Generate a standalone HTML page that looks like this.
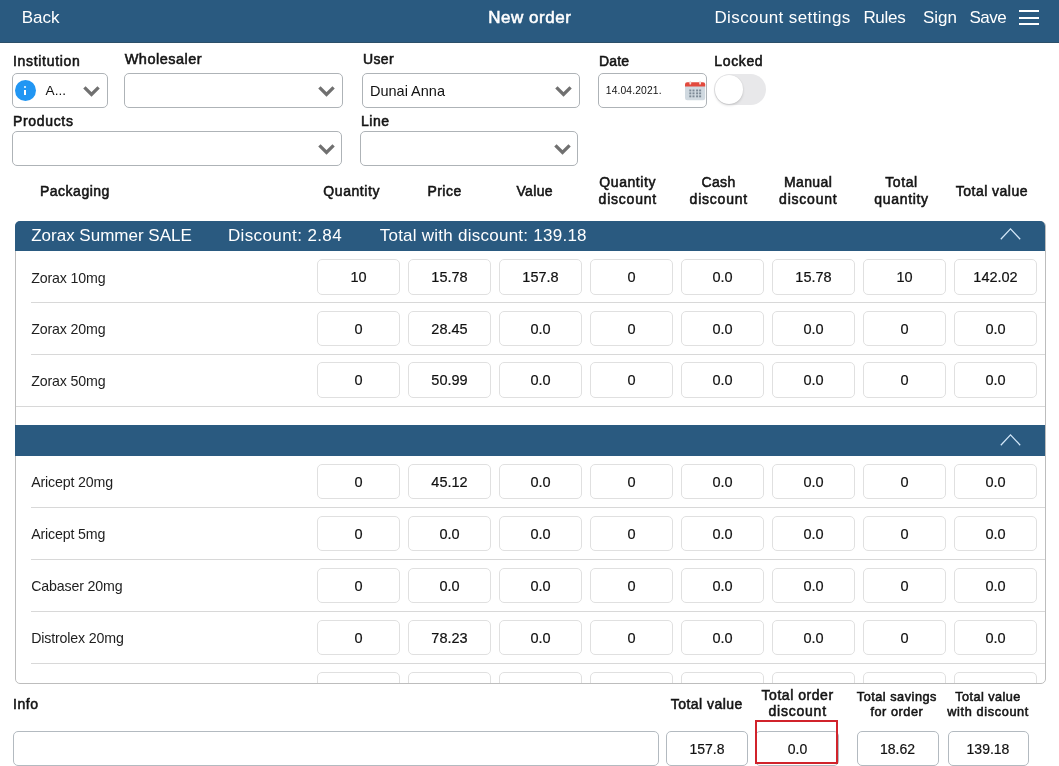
<!DOCTYPE html>
<html><head><meta charset="utf-8">
<style>
html,body{margin:0;padding:0;}
body{width:1059px;height:766px;overflow:hidden;position:relative;background:#fff;font-family:"Liberation Sans",sans-serif;color:#111;}
.a{position:absolute;white-space:nowrap;line-height:1;}
#w{position:absolute;left:0;top:0;width:1059px;height:766px;will-change:transform;}
</style></head><body><div id="w">
<div style="position:absolute;left:0px;top:0px;width:1059px;height:43px;background:#2A5A80;"></div>
<div style="position:absolute;left:0px;top:42px;width:1059px;height:1px;background:#2B4F69;"></div>
<div class="a" style="left:21.70px;top:8.71px;font-size:17px;font-weight:400;color:#fff;">Back</div>
<div class="a" style="left:488.20px;top:8.71px;font-size:17px;font-weight:400;color:#fff;letter-spacing:0.524px;-webkit-text-stroke:0.55px #fff;">New order</div>
<div class="a" style="left:714.40px;top:8.51px;font-size:17px;font-weight:400;color:#fff;letter-spacing:0.400px;">Discount settings</div>
<div class="a" style="left:863.40px;top:8.51px;font-size:17px;font-weight:400;color:#fff;letter-spacing:-0.300px;">Rules</div>
<div class="a" style="left:922.90px;top:8.51px;font-size:17px;font-weight:400;color:#fff;">Sign</div>
<div class="a" style="left:969.50px;top:8.51px;font-size:17px;font-weight:400;color:#fff;letter-spacing:-0.500px;">Save</div>
<div style="position:absolute;left:1019px;top:9.5px;width:20px;height:2px;background:#fff;"></div>
<div style="position:absolute;left:1019px;top:16.5px;width:20px;height:2px;background:#fff;"></div>
<div style="position:absolute;left:1019px;top:22.5px;width:20px;height:2px;background:#fff;"></div>
<div class="a" style="left:12.90px;top:54.35px;font-size:14px;font-weight:400;color:#141414;letter-spacing:0.702px;-webkit-text-stroke:0.55px #141414;">Institution</div>
<div class="a" style="left:124.70px;top:52.03px;font-size:14.5px;font-weight:400;color:#141414;letter-spacing:0.483px;-webkit-text-stroke:0.55px #141414;">Wholesaler</div>
<div class="a" style="left:362.90px;top:52.45px;font-size:14px;font-weight:400;color:#141414;letter-spacing:0.395px;-webkit-text-stroke:0.55px #141414;">User</div>
<div class="a" style="left:599.00px;top:54.35px;font-size:14px;font-weight:400;color:#141414;letter-spacing:0.195px;-webkit-text-stroke:0.55px #141414;">Date</div>
<div class="a" style="left:714.30px;top:54.35px;font-size:14px;font-weight:400;color:#141414;letter-spacing:0.643px;-webkit-text-stroke:0.55px #141414;">Locked</div>
<div class="a" style="left:12.90px;top:114.45px;font-size:14px;font-weight:400;color:#141414;letter-spacing:0.680px;-webkit-text-stroke:0.55px #141414;">Products</div>
<div class="a" style="left:360.90px;top:113.75px;font-size:14px;font-weight:400;color:#141414;letter-spacing:0.578px;-webkit-text-stroke:0.55px #141414;">Line</div>
<div style="position:absolute;left:12px;top:73px;width:96px;height:35px;box-sizing:border-box;border:1px solid #AEB3B7;border-radius:5px;background:#fff;"></div>
<div style="position:absolute;left:14.5px;top:80.2px;width:21px;height:21px;border-radius:50%;background:#2196F3;"></div>
<div style="position:absolute;left:23.8px;top:85.9px;width:2.5px;height:2.4px;border-radius:50%;background:#fff;"></div>
<div style="position:absolute;left:23.8px;top:89.5px;width:2.5px;height:5.7px;background:#fff;"></div>
<div class="a" style="left:45.60px;top:84.09px;font-size:13.6px;font-weight:400;color:#111;">A...</div>
<svg style="position:absolute;left:83px;top:86px;" width="17" height="11" viewBox="0 0 17 11"><path d="M1.4 1.4 L8.5 8.5 L15.6 1.4" fill="none" stroke="#707070" stroke-width="3.3"/></svg>
<div style="position:absolute;left:124px;top:73px;width:219px;height:35px;box-sizing:border-box;border:1px solid #AEB3B7;border-radius:5px;background:#fff;"></div>
<svg style="position:absolute;left:318px;top:86px;" width="17" height="11" viewBox="0 0 17 11"><path d="M1.4 1.4 L8.5 8.5 L15.6 1.4" fill="none" stroke="#707070" stroke-width="3.3"/></svg>
<div style="position:absolute;left:362px;top:73px;width:218px;height:35px;box-sizing:border-box;border:1px solid #AEB3B7;border-radius:5px;background:#fff;"></div>
<div class="a" style="left:370.00px;top:83.73px;font-size:14.5px;font-weight:400;color:#111;">Dunai Anna</div>
<svg style="position:absolute;left:555px;top:86px;" width="17" height="11" viewBox="0 0 17 11"><path d="M1.4 1.4 L8.5 8.5 L15.6 1.4" fill="none" stroke="#707070" stroke-width="3.3"/></svg>
<div style="position:absolute;left:598px;top:73px;width:109px;height:35px;box-sizing:border-box;border:1px solid #AEB3B7;border-radius:5px;background:#fff;"></div>
<div class="a" style="left:605.80px;top:86.28px;font-size:10.3px;font-weight:400;color:#111;letter-spacing:0.130px;">14.04.2021.</div>
<svg style="position:absolute;left:685px;top:80.5px;" width="21" height="20" viewBox="0 0 21 20"><rect x="0" y="3" width="20.2" height="16.3" rx="2.2" fill="#D0D9E0"/><path d="M0 3.4 Q0 1.3 2.2 1.3 L18 1.3 Q20.2 1.3 20.2 3.4 L20.2 5.6 L0 5.6 Z" fill="#E2493D"/><rect x="4.4" y="0" width="1.8" height="3.6" rx="0.9" fill="#F4D9D6"/><rect x="14.2" y="0" width="1.8" height="3.6" rx="0.9" fill="#F4D9D6"/><g fill="#7D8A96"><rect x="4.3" y="8.5" width="2" height="1.9"/><rect x="4.3" y="11.4" width="2" height="1.9"/><rect x="4.3" y="14.4" width="2" height="1.9"/><rect x="7.5" y="8.5" width="2" height="1.9"/><rect x="7.5" y="11.4" width="2" height="1.9"/><rect x="7.5" y="14.4" width="2" height="1.9"/><rect x="11.1" y="8.5" width="2" height="1.9"/><rect x="11.1" y="11.4" width="2" height="1.9"/><rect x="11.1" y="14.4" width="2" height="1.9"/><rect x="14.1" y="8.5" width="2" height="1.9"/><rect x="14.1" y="11.4" width="2" height="1.9"/><rect x="14.1" y="14.4" width="2" height="1.9"/></g></svg>
<div style="position:absolute;left:714px;top:74px;width:52px;height:31px;border-radius:15.5px;background:#E8E8EA;"></div>
<div style="position:absolute;left:714.8px;top:75.4px;width:28.5px;height:28.5px;border-radius:50%;background:#fff;box-shadow:0 1.5px 2.5px rgba(0,0,0,0.14),0 0 1px rgba(0,0,0,0.12);"></div>
<div style="position:absolute;left:12px;top:131px;width:330px;height:35px;box-sizing:border-box;border:1px solid #AEB3B7;border-radius:5px;background:#fff;"></div>
<svg style="position:absolute;left:317.8px;top:144px;" width="17" height="11" viewBox="0 0 17 11"><path d="M1.4 1.4 L8.5 8.5 L15.6 1.4" fill="none" stroke="#707070" stroke-width="3.3"/></svg>
<div style="position:absolute;left:360px;top:131px;width:218px;height:35px;box-sizing:border-box;border:1px solid #AEB3B7;border-radius:5px;background:#fff;"></div>
<svg style="position:absolute;left:554px;top:144px;" width="17" height="11" viewBox="0 0 17 11"><path d="M1.4 1.4 L8.5 8.5 L15.6 1.4" fill="none" stroke="#707070" stroke-width="3.3"/></svg>
<div class="a" style="left:39.90px;top:184.25px;font-size:14px;font-weight:400;color:#141414;letter-spacing:0.516px;-webkit-text-stroke:0.55px #141414;">Packaging</div>
<div class="a" style="left:323.30px;top:184.25px;font-size:14px;font-weight:400;color:#141414;letter-spacing:0.580px;-webkit-text-stroke:0.55px #141414;">Quantity</div>
<div class="a" style="left:427.40px;top:184.25px;font-size:14px;font-weight:400;color:#141414;letter-spacing:0.469px;-webkit-text-stroke:0.55px #141414;">Price</div>
<div class="a" style="left:516.40px;top:184.25px;font-size:14px;font-weight:400;color:#141414;letter-spacing:0.362px;-webkit-text-stroke:0.55px #141414;">Value</div>
<div class="a" style="left:477.69px;width:300px;text-align:center;top:174.95px;font-size:14px;font-weight:400;color:#141414;letter-spacing:0.580px;-webkit-text-stroke:0.55px #141414;">Quantity</div>
<div class="a" style="left:477.79px;width:300px;text-align:center;top:191.75px;font-size:14px;font-weight:400;color:#141414;letter-spacing:0.773px;-webkit-text-stroke:0.55px #141414;">discount</div>
<div class="a" style="left:568.59px;width:300px;text-align:center;top:174.95px;font-size:14px;font-weight:400;color:#141414;letter-spacing:0.387px;-webkit-text-stroke:0.55px #141414;">Cash</div>
<div class="a" style="left:568.79px;width:300px;text-align:center;top:191.75px;font-size:14px;font-weight:400;color:#141414;letter-spacing:0.773px;-webkit-text-stroke:0.55px #141414;">discount</div>
<div class="a" style="left:658.09px;width:300px;text-align:center;top:174.95px;font-size:14px;font-weight:400;color:#141414;letter-spacing:0.385px;-webkit-text-stroke:0.55px #141414;">Manual</div>
<div class="a" style="left:658.29px;width:300px;text-align:center;top:191.75px;font-size:14px;font-weight:400;color:#141414;letter-spacing:0.773px;-webkit-text-stroke:0.55px #141414;">discount</div>
<div class="a" style="left:751.48px;width:300px;text-align:center;top:174.95px;font-size:14px;font-weight:400;color:#141414;letter-spacing:0.566px;-webkit-text-stroke:0.55px #141414;">Total</div>
<div class="a" style="left:751.54px;width:300px;text-align:center;top:191.75px;font-size:14px;font-weight:400;color:#141414;letter-spacing:0.676px;-webkit-text-stroke:0.55px #141414;">quantity</div>
<div class="a" style="left:955.80px;top:184.25px;font-size:14px;font-weight:400;color:#141414;letter-spacing:0.469px;-webkit-text-stroke:0.55px #141414;">Total value</div>
<div style="position:absolute;left:14.6px;top:221px;width:1031.4px;height:462.6px;box-sizing:border-box;border:1.4px solid #BDBDBD;border-radius:5px;"></div>
<div style="position:absolute;left:15px;top:221px;width:1030px;height:30px;background:#2A5A80;border-radius:5px 5px 0 0;"></div>
<div class="a" style="left:31.20px;top:226.81px;font-size:17px;font-weight:400;color:#fff;">Zorax Summer SALE</div>
<div class="a" style="left:227.90px;top:226.81px;font-size:17px;font-weight:400;color:#fff;letter-spacing:0.390px;">Discount: 2.84</div>
<div class="a" style="left:379.70px;top:226.81px;font-size:17px;font-weight:400;color:#fff;letter-spacing:0.250px;">Total with discount: 139.18</div>
<svg style="position:absolute;left:1000px;top:227.2px;" width="21" height="13" viewBox="0 0 21 13"><path d="M0.8 12.2 L10.5 1.8 L20.2 12.2" fill="none" stroke="#D3E7F8" stroke-width="1.25"/></svg>
<div class="a" style="left:31.20px;top:270.58px;font-size:14.2px;font-weight:400;color:#1E1E1E;letter-spacing:-0.150px;">Zorax 10mg</div>
<div style="position:absolute;left:317px;top:259.3px;width:83px;height:35.6px;box-sizing:border-box;border:1px solid #E0E0E0;border-radius:5px;background:#fff;"></div>
<div class="a" style="left:208.50px;width:300px;text-align:center;top:269.83px;font-size:14.5px;font-weight:400;color:#111;-webkit-text-stroke:0.2px #111;">10</div>
<div style="position:absolute;left:408px;top:259.3px;width:83px;height:35.6px;box-sizing:border-box;border:1px solid #E0E0E0;border-radius:5px;background:#fff;"></div>
<div class="a" style="left:299.50px;width:300px;text-align:center;top:269.83px;font-size:14.5px;font-weight:400;color:#111;-webkit-text-stroke:0.2px #111;">15.78</div>
<div style="position:absolute;left:499px;top:259.3px;width:83px;height:35.6px;box-sizing:border-box;border:1px solid #E0E0E0;border-radius:5px;background:#fff;"></div>
<div class="a" style="left:390.50px;width:300px;text-align:center;top:269.83px;font-size:14.5px;font-weight:400;color:#111;-webkit-text-stroke:0.2px #111;">157.8</div>
<div style="position:absolute;left:590px;top:259.3px;width:83px;height:35.6px;box-sizing:border-box;border:1px solid #E0E0E0;border-radius:5px;background:#fff;"></div>
<div class="a" style="left:481.50px;width:300px;text-align:center;top:269.83px;font-size:14.5px;font-weight:400;color:#111;-webkit-text-stroke:0.2px #111;">0</div>
<div style="position:absolute;left:681px;top:259.3px;width:83px;height:35.6px;box-sizing:border-box;border:1px solid #E0E0E0;border-radius:5px;background:#fff;"></div>
<div class="a" style="left:572.50px;width:300px;text-align:center;top:269.83px;font-size:14.5px;font-weight:400;color:#111;-webkit-text-stroke:0.2px #111;">0.0</div>
<div style="position:absolute;left:772px;top:259.3px;width:83px;height:35.6px;box-sizing:border-box;border:1px solid #E0E0E0;border-radius:5px;background:#fff;"></div>
<div class="a" style="left:663.50px;width:300px;text-align:center;top:269.83px;font-size:14.5px;font-weight:400;color:#111;-webkit-text-stroke:0.2px #111;">15.78</div>
<div style="position:absolute;left:863px;top:259.3px;width:83px;height:35.6px;box-sizing:border-box;border:1px solid #E0E0E0;border-radius:5px;background:#fff;"></div>
<div class="a" style="left:754.50px;width:300px;text-align:center;top:269.83px;font-size:14.5px;font-weight:400;color:#111;-webkit-text-stroke:0.2px #111;">10</div>
<div style="position:absolute;left:954px;top:259.3px;width:83px;height:35.6px;box-sizing:border-box;border:1px solid #E0E0E0;border-radius:5px;background:#fff;"></div>
<div class="a" style="left:845.50px;width:300px;text-align:center;top:269.83px;font-size:14.5px;font-weight:400;color:#111;-webkit-text-stroke:0.2px #111;">142.02</div>
<div class="a" style="left:31.20px;top:321.98px;font-size:14.2px;font-weight:400;color:#1E1E1E;letter-spacing:-0.150px;">Zorax 20mg</div>
<div style="position:absolute;left:317px;top:310.7px;width:83px;height:35.6px;box-sizing:border-box;border:1px solid #E0E0E0;border-radius:5px;background:#fff;"></div>
<div class="a" style="left:208.50px;width:300px;text-align:center;top:321.73px;font-size:14.5px;font-weight:400;color:#111;-webkit-text-stroke:0.2px #111;">0</div>
<div style="position:absolute;left:408px;top:310.7px;width:83px;height:35.6px;box-sizing:border-box;border:1px solid #E0E0E0;border-radius:5px;background:#fff;"></div>
<div class="a" style="left:299.50px;width:300px;text-align:center;top:321.73px;font-size:14.5px;font-weight:400;color:#111;-webkit-text-stroke:0.2px #111;">28.45</div>
<div style="position:absolute;left:499px;top:310.7px;width:83px;height:35.6px;box-sizing:border-box;border:1px solid #E0E0E0;border-radius:5px;background:#fff;"></div>
<div class="a" style="left:390.50px;width:300px;text-align:center;top:321.73px;font-size:14.5px;font-weight:400;color:#111;-webkit-text-stroke:0.2px #111;">0.0</div>
<div style="position:absolute;left:590px;top:310.7px;width:83px;height:35.6px;box-sizing:border-box;border:1px solid #E0E0E0;border-radius:5px;background:#fff;"></div>
<div class="a" style="left:481.50px;width:300px;text-align:center;top:321.73px;font-size:14.5px;font-weight:400;color:#111;-webkit-text-stroke:0.2px #111;">0</div>
<div style="position:absolute;left:681px;top:310.7px;width:83px;height:35.6px;box-sizing:border-box;border:1px solid #E0E0E0;border-radius:5px;background:#fff;"></div>
<div class="a" style="left:572.50px;width:300px;text-align:center;top:321.73px;font-size:14.5px;font-weight:400;color:#111;-webkit-text-stroke:0.2px #111;">0.0</div>
<div style="position:absolute;left:772px;top:310.7px;width:83px;height:35.6px;box-sizing:border-box;border:1px solid #E0E0E0;border-radius:5px;background:#fff;"></div>
<div class="a" style="left:663.50px;width:300px;text-align:center;top:321.73px;font-size:14.5px;font-weight:400;color:#111;-webkit-text-stroke:0.2px #111;">0.0</div>
<div style="position:absolute;left:863px;top:310.7px;width:83px;height:35.6px;box-sizing:border-box;border:1px solid #E0E0E0;border-radius:5px;background:#fff;"></div>
<div class="a" style="left:754.50px;width:300px;text-align:center;top:321.73px;font-size:14.5px;font-weight:400;color:#111;-webkit-text-stroke:0.2px #111;">0</div>
<div style="position:absolute;left:954px;top:310.7px;width:83px;height:35.6px;box-sizing:border-box;border:1px solid #E0E0E0;border-radius:5px;background:#fff;"></div>
<div class="a" style="left:845.50px;width:300px;text-align:center;top:321.73px;font-size:14.5px;font-weight:400;color:#111;-webkit-text-stroke:0.2px #111;">0.0</div>
<div class="a" style="left:31.20px;top:373.58px;font-size:14.2px;font-weight:400;color:#1E1E1E;letter-spacing:-0.150px;">Zorax 50mg</div>
<div style="position:absolute;left:317px;top:362.3px;width:83px;height:35.6px;box-sizing:border-box;border:1px solid #E0E0E0;border-radius:5px;background:#fff;"></div>
<div class="a" style="left:208.50px;width:300px;text-align:center;top:373.33px;font-size:14.5px;font-weight:400;color:#111;-webkit-text-stroke:0.2px #111;">0</div>
<div style="position:absolute;left:408px;top:362.3px;width:83px;height:35.6px;box-sizing:border-box;border:1px solid #E0E0E0;border-radius:5px;background:#fff;"></div>
<div class="a" style="left:299.50px;width:300px;text-align:center;top:373.33px;font-size:14.5px;font-weight:400;color:#111;-webkit-text-stroke:0.2px #111;">50.99</div>
<div style="position:absolute;left:499px;top:362.3px;width:83px;height:35.6px;box-sizing:border-box;border:1px solid #E0E0E0;border-radius:5px;background:#fff;"></div>
<div class="a" style="left:390.50px;width:300px;text-align:center;top:373.33px;font-size:14.5px;font-weight:400;color:#111;-webkit-text-stroke:0.2px #111;">0.0</div>
<div style="position:absolute;left:590px;top:362.3px;width:83px;height:35.6px;box-sizing:border-box;border:1px solid #E0E0E0;border-radius:5px;background:#fff;"></div>
<div class="a" style="left:481.50px;width:300px;text-align:center;top:373.33px;font-size:14.5px;font-weight:400;color:#111;-webkit-text-stroke:0.2px #111;">0</div>
<div style="position:absolute;left:681px;top:362.3px;width:83px;height:35.6px;box-sizing:border-box;border:1px solid #E0E0E0;border-radius:5px;background:#fff;"></div>
<div class="a" style="left:572.50px;width:300px;text-align:center;top:373.33px;font-size:14.5px;font-weight:400;color:#111;-webkit-text-stroke:0.2px #111;">0.0</div>
<div style="position:absolute;left:772px;top:362.3px;width:83px;height:35.6px;box-sizing:border-box;border:1px solid #E0E0E0;border-radius:5px;background:#fff;"></div>
<div class="a" style="left:663.50px;width:300px;text-align:center;top:373.33px;font-size:14.5px;font-weight:400;color:#111;-webkit-text-stroke:0.2px #111;">0.0</div>
<div style="position:absolute;left:863px;top:362.3px;width:83px;height:35.6px;box-sizing:border-box;border:1px solid #E0E0E0;border-radius:5px;background:#fff;"></div>
<div class="a" style="left:754.50px;width:300px;text-align:center;top:373.33px;font-size:14.5px;font-weight:400;color:#111;-webkit-text-stroke:0.2px #111;">0</div>
<div style="position:absolute;left:954px;top:362.3px;width:83px;height:35.6px;box-sizing:border-box;border:1px solid #E0E0E0;border-radius:5px;background:#fff;"></div>
<div class="a" style="left:845.50px;width:300px;text-align:center;top:373.33px;font-size:14.5px;font-weight:400;color:#111;-webkit-text-stroke:0.2px #111;">0.0</div>
<div style="position:absolute;left:31px;top:302px;width:1014px;height:1px;background:#D8D8D8;"></div>
<div style="position:absolute;left:31px;top:354px;width:1014px;height:1px;background:#D8D8D8;"></div>
<div style="position:absolute;left:16px;top:406px;width:1029px;height:1px;background:#D8D8D8;"></div>
<div style="position:absolute;left:15px;top:425.3px;width:1030px;height:30.4px;background:#2A5A80;"></div>
<svg style="position:absolute;left:1000px;top:432.5px;" width="21" height="13" viewBox="0 0 21 13"><path d="M0.8 12.2 L10.5 1.8 L20.2 12.2" fill="none" stroke="#D3E7F8" stroke-width="1.25"/></svg>
<div style="position:absolute;left:0;top:0;width:1059px;height:683px;overflow:hidden;">
<div class="a" style="left:31.20px;top:475.18px;font-size:14.2px;font-weight:400;color:#1E1E1E;letter-spacing:-0.150px;">Aricept 20mg</div>
<div style="position:absolute;left:317px;top:463.90000000000003px;width:83px;height:35.6px;box-sizing:border-box;border:1px solid #E0E0E0;border-radius:5px;background:#fff;"></div>
<div class="a" style="left:208.50px;width:300px;text-align:center;top:474.93px;font-size:14.5px;font-weight:400;color:#111;-webkit-text-stroke:0.2px #111;">0</div>
<div style="position:absolute;left:408px;top:463.90000000000003px;width:83px;height:35.6px;box-sizing:border-box;border:1px solid #E0E0E0;border-radius:5px;background:#fff;"></div>
<div class="a" style="left:299.50px;width:300px;text-align:center;top:474.93px;font-size:14.5px;font-weight:400;color:#111;-webkit-text-stroke:0.2px #111;">45.12</div>
<div style="position:absolute;left:499px;top:463.90000000000003px;width:83px;height:35.6px;box-sizing:border-box;border:1px solid #E0E0E0;border-radius:5px;background:#fff;"></div>
<div class="a" style="left:390.50px;width:300px;text-align:center;top:474.93px;font-size:14.5px;font-weight:400;color:#111;-webkit-text-stroke:0.2px #111;">0.0</div>
<div style="position:absolute;left:590px;top:463.90000000000003px;width:83px;height:35.6px;box-sizing:border-box;border:1px solid #E0E0E0;border-radius:5px;background:#fff;"></div>
<div class="a" style="left:481.50px;width:300px;text-align:center;top:474.93px;font-size:14.5px;font-weight:400;color:#111;-webkit-text-stroke:0.2px #111;">0</div>
<div style="position:absolute;left:681px;top:463.90000000000003px;width:83px;height:35.6px;box-sizing:border-box;border:1px solid #E0E0E0;border-radius:5px;background:#fff;"></div>
<div class="a" style="left:572.50px;width:300px;text-align:center;top:474.93px;font-size:14.5px;font-weight:400;color:#111;-webkit-text-stroke:0.2px #111;">0.0</div>
<div style="position:absolute;left:772px;top:463.90000000000003px;width:83px;height:35.6px;box-sizing:border-box;border:1px solid #E0E0E0;border-radius:5px;background:#fff;"></div>
<div class="a" style="left:663.50px;width:300px;text-align:center;top:474.93px;font-size:14.5px;font-weight:400;color:#111;-webkit-text-stroke:0.2px #111;">0.0</div>
<div style="position:absolute;left:863px;top:463.90000000000003px;width:83px;height:35.6px;box-sizing:border-box;border:1px solid #E0E0E0;border-radius:5px;background:#fff;"></div>
<div class="a" style="left:754.50px;width:300px;text-align:center;top:474.93px;font-size:14.5px;font-weight:400;color:#111;-webkit-text-stroke:0.2px #111;">0</div>
<div style="position:absolute;left:954px;top:463.90000000000003px;width:83px;height:35.6px;box-sizing:border-box;border:1px solid #E0E0E0;border-radius:5px;background:#fff;"></div>
<div class="a" style="left:845.50px;width:300px;text-align:center;top:474.93px;font-size:14.5px;font-weight:400;color:#111;-webkit-text-stroke:0.2px #111;">0.0</div>
<div class="a" style="left:31.20px;top:527.08px;font-size:14.2px;font-weight:400;color:#1E1E1E;letter-spacing:-0.150px;">Aricept 5mg</div>
<div style="position:absolute;left:317px;top:515.8px;width:83px;height:35.6px;box-sizing:border-box;border:1px solid #E0E0E0;border-radius:5px;background:#fff;"></div>
<div class="a" style="left:208.50px;width:300px;text-align:center;top:526.83px;font-size:14.5px;font-weight:400;color:#111;-webkit-text-stroke:0.2px #111;">0</div>
<div style="position:absolute;left:408px;top:515.8px;width:83px;height:35.6px;box-sizing:border-box;border:1px solid #E0E0E0;border-radius:5px;background:#fff;"></div>
<div class="a" style="left:299.50px;width:300px;text-align:center;top:526.83px;font-size:14.5px;font-weight:400;color:#111;-webkit-text-stroke:0.2px #111;">0.0</div>
<div style="position:absolute;left:499px;top:515.8px;width:83px;height:35.6px;box-sizing:border-box;border:1px solid #E0E0E0;border-radius:5px;background:#fff;"></div>
<div class="a" style="left:390.50px;width:300px;text-align:center;top:526.83px;font-size:14.5px;font-weight:400;color:#111;-webkit-text-stroke:0.2px #111;">0.0</div>
<div style="position:absolute;left:590px;top:515.8px;width:83px;height:35.6px;box-sizing:border-box;border:1px solid #E0E0E0;border-radius:5px;background:#fff;"></div>
<div class="a" style="left:481.50px;width:300px;text-align:center;top:526.83px;font-size:14.5px;font-weight:400;color:#111;-webkit-text-stroke:0.2px #111;">0</div>
<div style="position:absolute;left:681px;top:515.8px;width:83px;height:35.6px;box-sizing:border-box;border:1px solid #E0E0E0;border-radius:5px;background:#fff;"></div>
<div class="a" style="left:572.50px;width:300px;text-align:center;top:526.83px;font-size:14.5px;font-weight:400;color:#111;-webkit-text-stroke:0.2px #111;">0.0</div>
<div style="position:absolute;left:772px;top:515.8px;width:83px;height:35.6px;box-sizing:border-box;border:1px solid #E0E0E0;border-radius:5px;background:#fff;"></div>
<div class="a" style="left:663.50px;width:300px;text-align:center;top:526.83px;font-size:14.5px;font-weight:400;color:#111;-webkit-text-stroke:0.2px #111;">0.0</div>
<div style="position:absolute;left:863px;top:515.8px;width:83px;height:35.6px;box-sizing:border-box;border:1px solid #E0E0E0;border-radius:5px;background:#fff;"></div>
<div class="a" style="left:754.50px;width:300px;text-align:center;top:526.83px;font-size:14.5px;font-weight:400;color:#111;-webkit-text-stroke:0.2px #111;">0</div>
<div style="position:absolute;left:954px;top:515.8px;width:83px;height:35.6px;box-sizing:border-box;border:1px solid #E0E0E0;border-radius:5px;background:#fff;"></div>
<div class="a" style="left:845.50px;width:300px;text-align:center;top:526.83px;font-size:14.5px;font-weight:400;color:#111;-webkit-text-stroke:0.2px #111;">0.0</div>
<div class="a" style="left:31.20px;top:579.08px;font-size:14.2px;font-weight:400;color:#1E1E1E;letter-spacing:-0.150px;">Cabaser 20mg</div>
<div style="position:absolute;left:317px;top:567.8px;width:83px;height:35.6px;box-sizing:border-box;border:1px solid #E0E0E0;border-radius:5px;background:#fff;"></div>
<div class="a" style="left:208.50px;width:300px;text-align:center;top:578.83px;font-size:14.5px;font-weight:400;color:#111;-webkit-text-stroke:0.2px #111;">0</div>
<div style="position:absolute;left:408px;top:567.8px;width:83px;height:35.6px;box-sizing:border-box;border:1px solid #E0E0E0;border-radius:5px;background:#fff;"></div>
<div class="a" style="left:299.50px;width:300px;text-align:center;top:578.83px;font-size:14.5px;font-weight:400;color:#111;-webkit-text-stroke:0.2px #111;">0.0</div>
<div style="position:absolute;left:499px;top:567.8px;width:83px;height:35.6px;box-sizing:border-box;border:1px solid #E0E0E0;border-radius:5px;background:#fff;"></div>
<div class="a" style="left:390.50px;width:300px;text-align:center;top:578.83px;font-size:14.5px;font-weight:400;color:#111;-webkit-text-stroke:0.2px #111;">0.0</div>
<div style="position:absolute;left:590px;top:567.8px;width:83px;height:35.6px;box-sizing:border-box;border:1px solid #E0E0E0;border-radius:5px;background:#fff;"></div>
<div class="a" style="left:481.50px;width:300px;text-align:center;top:578.83px;font-size:14.5px;font-weight:400;color:#111;-webkit-text-stroke:0.2px #111;">0</div>
<div style="position:absolute;left:681px;top:567.8px;width:83px;height:35.6px;box-sizing:border-box;border:1px solid #E0E0E0;border-radius:5px;background:#fff;"></div>
<div class="a" style="left:572.50px;width:300px;text-align:center;top:578.83px;font-size:14.5px;font-weight:400;color:#111;-webkit-text-stroke:0.2px #111;">0.0</div>
<div style="position:absolute;left:772px;top:567.8px;width:83px;height:35.6px;box-sizing:border-box;border:1px solid #E0E0E0;border-radius:5px;background:#fff;"></div>
<div class="a" style="left:663.50px;width:300px;text-align:center;top:578.83px;font-size:14.5px;font-weight:400;color:#111;-webkit-text-stroke:0.2px #111;">0.0</div>
<div style="position:absolute;left:863px;top:567.8px;width:83px;height:35.6px;box-sizing:border-box;border:1px solid #E0E0E0;border-radius:5px;background:#fff;"></div>
<div class="a" style="left:754.50px;width:300px;text-align:center;top:578.83px;font-size:14.5px;font-weight:400;color:#111;-webkit-text-stroke:0.2px #111;">0</div>
<div style="position:absolute;left:954px;top:567.8px;width:83px;height:35.6px;box-sizing:border-box;border:1px solid #E0E0E0;border-radius:5px;background:#fff;"></div>
<div class="a" style="left:845.50px;width:300px;text-align:center;top:578.83px;font-size:14.5px;font-weight:400;color:#111;-webkit-text-stroke:0.2px #111;">0.0</div>
<div class="a" style="left:31.20px;top:630.98px;font-size:14.2px;font-weight:400;color:#1E1E1E;letter-spacing:-0.150px;">Distrolex 20mg</div>
<div style="position:absolute;left:317px;top:619.6999999999999px;width:83px;height:35.6px;box-sizing:border-box;border:1px solid #E0E0E0;border-radius:5px;background:#fff;"></div>
<div class="a" style="left:208.50px;width:300px;text-align:center;top:630.73px;font-size:14.5px;font-weight:400;color:#111;-webkit-text-stroke:0.2px #111;">0</div>
<div style="position:absolute;left:408px;top:619.6999999999999px;width:83px;height:35.6px;box-sizing:border-box;border:1px solid #E0E0E0;border-radius:5px;background:#fff;"></div>
<div class="a" style="left:299.50px;width:300px;text-align:center;top:630.73px;font-size:14.5px;font-weight:400;color:#111;-webkit-text-stroke:0.2px #111;">78.23</div>
<div style="position:absolute;left:499px;top:619.6999999999999px;width:83px;height:35.6px;box-sizing:border-box;border:1px solid #E0E0E0;border-radius:5px;background:#fff;"></div>
<div class="a" style="left:390.50px;width:300px;text-align:center;top:630.73px;font-size:14.5px;font-weight:400;color:#111;-webkit-text-stroke:0.2px #111;">0.0</div>
<div style="position:absolute;left:590px;top:619.6999999999999px;width:83px;height:35.6px;box-sizing:border-box;border:1px solid #E0E0E0;border-radius:5px;background:#fff;"></div>
<div class="a" style="left:481.50px;width:300px;text-align:center;top:630.73px;font-size:14.5px;font-weight:400;color:#111;-webkit-text-stroke:0.2px #111;">0</div>
<div style="position:absolute;left:681px;top:619.6999999999999px;width:83px;height:35.6px;box-sizing:border-box;border:1px solid #E0E0E0;border-radius:5px;background:#fff;"></div>
<div class="a" style="left:572.50px;width:300px;text-align:center;top:630.73px;font-size:14.5px;font-weight:400;color:#111;-webkit-text-stroke:0.2px #111;">0.0</div>
<div style="position:absolute;left:772px;top:619.6999999999999px;width:83px;height:35.6px;box-sizing:border-box;border:1px solid #E0E0E0;border-radius:5px;background:#fff;"></div>
<div class="a" style="left:663.50px;width:300px;text-align:center;top:630.73px;font-size:14.5px;font-weight:400;color:#111;-webkit-text-stroke:0.2px #111;">0.0</div>
<div style="position:absolute;left:863px;top:619.6999999999999px;width:83px;height:35.6px;box-sizing:border-box;border:1px solid #E0E0E0;border-radius:5px;background:#fff;"></div>
<div class="a" style="left:754.50px;width:300px;text-align:center;top:630.73px;font-size:14.5px;font-weight:400;color:#111;-webkit-text-stroke:0.2px #111;">0</div>
<div style="position:absolute;left:954px;top:619.6999999999999px;width:83px;height:35.6px;box-sizing:border-box;border:1px solid #E0E0E0;border-radius:5px;background:#fff;"></div>
<div class="a" style="left:845.50px;width:300px;text-align:center;top:630.73px;font-size:14.5px;font-weight:400;color:#111;-webkit-text-stroke:0.2px #111;">0.0</div>
<div style="position:absolute;left:317px;top:671.6999999999999px;width:83px;height:35.6px;box-sizing:border-box;border:1px solid #E0E0E0;border-radius:5px;background:#fff;"></div>
<div style="position:absolute;left:408px;top:671.6999999999999px;width:83px;height:35.6px;box-sizing:border-box;border:1px solid #E0E0E0;border-radius:5px;background:#fff;"></div>
<div style="position:absolute;left:499px;top:671.6999999999999px;width:83px;height:35.6px;box-sizing:border-box;border:1px solid #E0E0E0;border-radius:5px;background:#fff;"></div>
<div style="position:absolute;left:590px;top:671.6999999999999px;width:83px;height:35.6px;box-sizing:border-box;border:1px solid #E0E0E0;border-radius:5px;background:#fff;"></div>
<div style="position:absolute;left:681px;top:671.6999999999999px;width:83px;height:35.6px;box-sizing:border-box;border:1px solid #E0E0E0;border-radius:5px;background:#fff;"></div>
<div style="position:absolute;left:772px;top:671.6999999999999px;width:83px;height:35.6px;box-sizing:border-box;border:1px solid #E0E0E0;border-radius:5px;background:#fff;"></div>
<div style="position:absolute;left:863px;top:671.6999999999999px;width:83px;height:35.6px;box-sizing:border-box;border:1px solid #E0E0E0;border-radius:5px;background:#fff;"></div>
<div style="position:absolute;left:954px;top:671.6999999999999px;width:83px;height:35.6px;box-sizing:border-box;border:1px solid #E0E0E0;border-radius:5px;background:#fff;"></div>
<div style="position:absolute;left:31px;top:507px;width:1014px;height:1px;background:#D8D8D8;"></div>
<div style="position:absolute;left:31px;top:559px;width:1014px;height:1px;background:#D8D8D8;"></div>
<div style="position:absolute;left:31px;top:611px;width:1014px;height:1px;background:#D8D8D8;"></div>
<div style="position:absolute;left:31px;top:663px;width:1014px;height:1px;background:#D8D8D8;"></div>
</div>
<div class="a" style="left:13.00px;top:696.95px;font-size:14px;font-weight:400;color:#141414;letter-spacing:0.574px;-webkit-text-stroke:0.55px #141414;">Info</div>
<div style="position:absolute;left:13px;top:731px;width:646px;height:35px;box-sizing:border-box;border:1px solid #B3BAC0;border-radius:5px;background:#fff;"></div>
<div class="a" style="left:670.70px;top:696.95px;font-size:14px;font-weight:400;color:#141414;letter-spacing:0.469px;-webkit-text-stroke:0.55px #141414;">Total value</div>
<div class="a" style="left:647.57px;width:300px;text-align:center;top:687.95px;font-size:14px;font-weight:400;color:#141414;letter-spacing:0.538px;-webkit-text-stroke:0.55px #141414;">Total order</div>
<div class="a" style="left:647.69px;width:300px;text-align:center;top:703.85px;font-size:14px;font-weight:400;color:#141414;letter-spacing:0.773px;-webkit-text-stroke:0.55px #141414;">discount</div>
<div class="a" style="left:746.86px;width:300px;text-align:center;top:690.55px;font-size:12.7px;font-weight:400;color:#141414;letter-spacing:0.523px;-webkit-text-stroke:0.55px #141414;">Total savings</div>
<div class="a" style="left:746.87px;width:300px;text-align:center;top:706.15px;font-size:12.7px;font-weight:400;color:#141414;letter-spacing:0.547px;-webkit-text-stroke:0.55px #141414;">for order</div>
<div class="a" style="left:838.01px;width:300px;text-align:center;top:690.55px;font-size:12.7px;font-weight:400;color:#141414;letter-spacing:0.426px;-webkit-text-stroke:0.55px #141414;">Total value</div>
<div class="a" style="left:838.12px;width:300px;text-align:center;top:706.15px;font-size:12.7px;font-weight:400;color:#141414;letter-spacing:0.648px;-webkit-text-stroke:0.55px #141414;">with discount</div>
<div style="position:absolute;left:666px;top:731px;width:82px;height:35px;box-sizing:border-box;border:1px solid #B3BAC0;border-radius:5px;background:#fff;"></div>
<div class="a" style="left:557.00px;width:300px;text-align:center;top:741.55px;font-size:14px;font-weight:400;color:#111;-webkit-text-stroke:0.2px #111;">157.8</div>
<div style="position:absolute;left:755px;top:731px;width:84px;height:35px;box-sizing:border-box;border:1px solid #B3BAC0;border-radius:5px;background:#fff;"></div>
<div class="a" style="left:647.50px;width:300px;text-align:center;top:741.55px;font-size:14px;font-weight:400;color:#111;-webkit-text-stroke:0.2px #111;">0.0</div>
<div style="position:absolute;left:755.4px;top:720.4px;width:82.8px;height:43.7px;box-sizing:border-box;border:2.5px solid #D1232B;"></div>
<div style="position:absolute;left:856.5px;top:731px;width:82px;height:35px;box-sizing:border-box;border:1px solid #B3BAC0;border-radius:5px;background:#fff;"></div>
<div class="a" style="left:747.50px;width:300px;text-align:center;top:741.55px;font-size:14px;font-weight:400;color:#111;-webkit-text-stroke:0.2px #111;">18.62</div>
<div style="position:absolute;left:947.5px;top:731px;width:81px;height:35px;box-sizing:border-box;border:1px solid #B3BAC0;border-radius:5px;background:#fff;"></div>
<div class="a" style="left:838.00px;width:300px;text-align:center;top:741.55px;font-size:14px;font-weight:400;color:#111;-webkit-text-stroke:0.2px #111;">139.18</div>
</div></body></html>
